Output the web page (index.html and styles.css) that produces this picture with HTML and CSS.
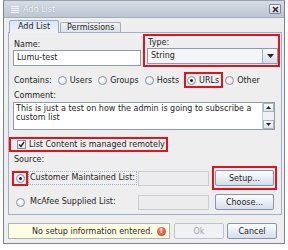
FILE: index.html
```html
<!DOCTYPE html>
<html lang="en">
<head>
  <meta charset="UTF-8">
  <title>Add List</title>
  <link rel="stylesheet" href="styles.css">
</head>
<body>
  <div class="window">
    <div class="titlebar">
      <svg class="menu" width="8" height="8" viewBox="0 0 8 8">
        <path d="M0 1.5h8M0 3.5h8M0 5.5h8M0 7.5h8" stroke="#f2f4f7" stroke-width="1"/>
      </svg>
      <span class="title">Add List</span>
      <span class="close">
        <svg width="7" height="7" viewBox="0 0 7 7"><path d="M1 1l5 5M6 1l-5 5" stroke="#2a2d33" stroke-width="1.6"/></svg>
      </span>
    </div>

    <div class="content">
      <div class="tabs">
        <div class="tab active">Add List</div>
        <div class="tab">Permissions</div>
      </div>

      <div class="panel">
        <div class="top">
          <div class="field name">
            <div class="label">Name:</div>
            <div class="input">Lumu-test</div>
          </div>
          <div class="field type mark">
            <div class="label">Type:</div>
            <div class="combo">
              <span class="value">String</span>
              <span class="drop"><svg width="7" height="4" viewBox="0 0 7 4"><path d="M0 0h7L3.5 4z" fill="#222"/></svg></span>
            </div>
          </div>
        </div>

        <div class="contains">
          <span class="lead">Contains:</span>
          <span class="opt"><span class="radio"></span>Users</span>
          <span class="opt"><span class="radio"></span>Groups</span>
          <span class="opt"><span class="radio"></span>Hosts</span>
          <span class="opt mark"><span class="radio on"></span>URLs</span>
          <span class="opt"><span class="radio"></span>Other</span>
        </div>

        <div class="label comment-label">Comment:</div>
        <div class="textarea">
          <div class="text">This is just a test on how the admin is going to subscribe a<br>custom list</div>
          <div class="scroll">
            <span class="sbtn"><svg width="5" height="3" viewBox="0 0 5 3"><path d="M0 3h5L2.5 0z" fill="#222"/></svg></span>
            <span class="strack"></span>
            <span class="sbtn"><svg width="5" height="3" viewBox="0 0 5 3"><path d="M0 0h5L2.5 3z" fill="#222"/></svg></span>
          </div>
        </div>

        <div class="remote mark">
          <span class="check"><svg width="7" height="7" viewBox="0 0 7 7"><path d="M1 3.5l2 2L6 1" stroke="#222" stroke-width="1.4" fill="none"/></svg></span>
          List Content is managed remotely
        </div>

        <div class="label source">Source:</div>

        <div class="src-row first">
          <span class="radio-box mark"><span class="radio on"></span></span>
          <span class="src-label focus">Customer Maintained List:</span>
          <span class="off-field"></span>
          <span class="btn-wrap mark"><span class="btn">Setup...</span></span>
        </div>
        <div class="src-row">
          <span class="radio-box"><span class="radio"></span></span>
          <span class="src-label">McAfee Supplied List:</span>
          <span class="off-field"></span>
          <span class="btn-wrap"><span class="btn">Choose...</span></span>
        </div>
      </div>

      <div class="footer">
        <div class="status">
          No setup information entered.
          <span class="err">!</span>
        </div>
        <span class="btn ok">Ok</span>
        <span class="btn">Cancel</span>
      </div>
    </div>
  </div>
</body>
</html>
```

FILE: styles.css
```css
* { box-sizing: border-box; }
body { margin: 0; background: #ffffff; font-family: "DejaVu Sans", sans-serif; font-size: 8px; color: #1e1e1e; }

.window { margin-left: 3px; width: 282px; height: 244px; border: 1px solid #7c828c; border-top-color: #9aa2ad; background: #eeeeee; display: flex; flex-direction: column; }

.titlebar { height: 17px; display: flex; align-items: center; padding: 0 3px 0 7px; background: linear-gradient(#d6dce4, #bcc5d1); border-bottom: 1px solid #a3acb9; }
.menu { margin-right: 4px; }
.title { color: #f7f9fb; text-shadow: 0 0 1px #8b95a3; flex: 1; font-size: 8px; }
.close { width: 12px; height: 10px; border: 1px solid #7f8793; border-radius: 1px; background: linear-gradient(#f1f3f6, #d4d9e0); display: flex; align-items: center; justify-content: center; }

.content { flex: 1; display: flex; flex-direction: column; padding: 2px 2px 0 4px; }

.tabs { display: flex; align-items: flex-end; padding-left: 1px; height: 12px; }
.tab { height: 10px; padding: 0 6px; line-height: 9px; border: 1px solid #a5acb6; border-bottom: none; border-radius: 2px 2px 0 0; background: linear-gradient(#eef0f3, #dfe2e6); margin-right: 1px; }
.tab.active { height: 13px; line-height: 12px; padding: 0 8px; background: linear-gradient(#dbe6f3, #f0f3f7); border-color: #97a9c2; position: relative; top: 1px; }

.panel { height: 183px; border: 1px solid #9fb1ca; padding: 1px 1px 0 4px; display: flex; flex-direction: column; }

.mark { outline: 2px solid #e2131c; outline-offset: -2px; }

.top { display: flex; align-items: flex-start; }
.field .label { height: 10px; line-height: 10px; padding-left: 1px; }
.name { width: 128px; margin-top: 6px; }
.type { flex: 1; margin-left: 2px; padding: 4px 2px 3px 4px; }
.input { height: 16px; line-height: 14px; padding-left: 3px; background: #fff; border: 1px solid #8e9bad; }
.combo { height: 16px; display: flex; border: 1px solid #8e9bad; background: #f4f5f7; }
.combo .value { flex: 1; line-height: 14px; padding-left: 3px; }
.drop { width: 15px; border-left: 1px solid #a4afbf; background: linear-gradient(#f9fafb, #d8dee7); display: flex; align-items: center; justify-content: center; }

.label { line-height: 10px; }

.contains { display: flex; align-items: center; height: 16px; margin-top: 5px; padding-left: 1px; }
.lead { margin-right: 6px; }
.opt { display: flex; align-items: center; height: 16px; margin-right: 6px; }
.opt.mark { padding: 0 4px 0 3px; margin-left: -1px; margin-right: 2px; }
.radio { width: 9px; height: 9px; border-radius: 50%; border: 1px solid #8393aa; background: radial-gradient(circle at 40% 35%, #ffffff, #d8e0eb); margin-right: 3px; display: inline-block; position: relative; }
.radio.on::after { content: ""; position: absolute; left: 2px; top: 2px; width: 3px; height: 3px; border-radius: 50%; background: #1d1d1d; }

.comment-label { margin-top: 3px; padding-left: 1px; }
.textarea { height: 28px; margin-top: 1px; margin-right: 5px; display: flex; background: #fff; border: 1px solid #8e9bad; }
.textarea .text { flex: 1; line-height: 9px; padding: 1px 0 0 2px; }
.scroll { width: 12px; display: flex; flex-direction: column; border-left: 1px solid #c3cad4; }
.sbtn { height: 9px; display: flex; align-items: center; justify-content: center; background: linear-gradient(#fbfbfc, #dde2e9); border: 1px solid #a9b3c1; }
.strack { flex: 1; background: #eef0f3; }

.remote { display: flex; align-items: center; height: 15px; width: 159px; margin-top: 7px; margin-left: -4px; padding-left: 8px; white-space: nowrap; }
.check { width: 9px; height: 9px; border: 1px solid #7f8ea5; background: linear-gradient(#ffffff, #dde3ea); margin-right: 3px; display: flex; align-items: center; justify-content: center; }

.source { margin-top: 3px; padding-left: 1px; }

.src-row { display: flex; align-items: center; height: 24px; }
.src-row.first { margin-top: 1px; }
.radio-box { width: 16px; height: 15px; display: flex; align-items: center; justify-content: center; margin-left: -1px; }
.radio-box .radio { margin-right: 0; }
.src-label { width: 109px; height: 14px; line-height: 12px; padding-left: 1px; border: 1px dotted transparent; white-space: nowrap; }
.src-label.focus { border-color: #9fb0c6; }
.off-field { width: 71px; height: 15px; background: #ececec; border: 1px solid #c7cdd5; margin-left: 1px; }
.btn-wrap { width: 65px; height: 24px; display: flex; align-items: center; justify-content: center; margin-left: 3px; }

.btn { display: inline-flex; align-items: center; justify-content: center; width: 59px; height: 16px; border: 1px solid #8796ad; border-radius: 2px; background: linear-gradient(#fdfdfe, #d6dee9); color: #1e1e1e; }

.footer { display: flex; align-items: center; margin-top: 8px; padding-right: 3px; }
.status { width: 162px; height: 16px; display: flex; align-items: center; justify-content: center; gap: 4px; padding-left: 20px; background: #ffffe3; border: 1px solid #a9b1bd; color: #2a2a2a; }
.err { width: 9px; height: 9px; border-radius: 50%; background: radial-gradient(circle at 40% 35%, #f58a70, #d4321f); color: #fff; font-size: 7px; font-weight: bold; line-height: 9px; text-align: center; }
.btn.ok { width: 50px; margin-left: 4px; color: #a3a8ae; border-color: #bcc4d0; background: #f0f1f3; }
.footer .btn:last-child { width: 50px; margin-left: 3px; }
```
